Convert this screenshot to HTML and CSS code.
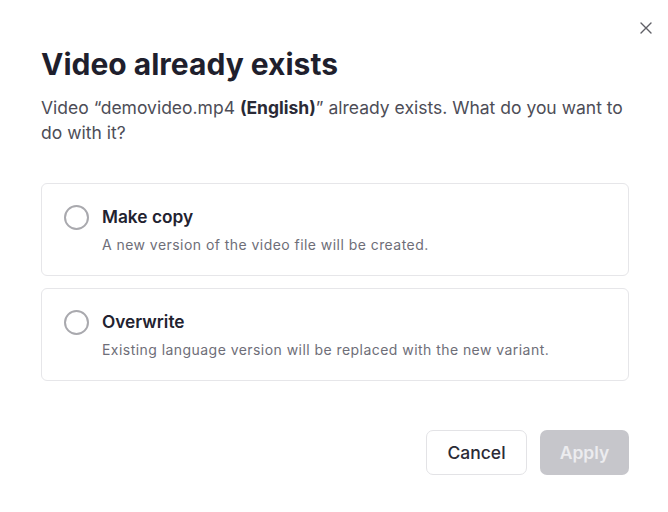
FILE: index.html
```html
<!DOCTYPE html>
<html>
<head>
<meta charset="utf-8">
<link rel="stylesheet" href="styles.css">
</head>
<body>
<div class="dialog">
  <button class="close" aria-label="Close">
    <svg width="12" height="12" viewBox="0 0 12 12"><path d="M1 1L11 11M11 1L1 11" stroke="#5f5f66" stroke-width="1.4" stroke-linecap="round"/></svg>
  </button>
  <h1 class="title">Video already exists</h1>
  <p class="lead">Video “demovideo.mp4 <b>(English)</b>” already exists. What do you want to do with it?</p>
  <div class="options">
    <label class="option">
      <span class="radio"></span>
      <span class="texts">
        <span class="opt-title">Make copy</span>
        <span class="opt-desc">A new version of the video file will be created.</span>
      </span>
    </label>
    <label class="option">
      <span class="radio"></span>
      <span class="texts">
        <span class="opt-title">Overwrite</span>
        <span class="opt-desc">Existing language version will be replaced with the new variant.</span>
      </span>
    </label>
  </div>
  <div class="actions">
    <button class="btn btn-secondary">Cancel</button>
    <button class="btn btn-primary" disabled>Apply</button>
  </div>
</div>
</body>
</html>
```
FILE: styles.css
```css
* { box-sizing: border-box; }
html, body { margin: 0; padding: 0; background: #fff; }
body { font-family: Inter, "Noto Sans", sans-serif; color: #22222f; }
.dialog {
  position: relative;
  width: 668px;
  height: 512px;
  padding: 44px 39px 0 41px;
}
.close {
  position: absolute;
  top: 22px;
  right: 16px;
  border: 0;
  background: none;
  padding: 0;
  width: 12px;
  height: 12px;
  display: flex;
}
.title {
  margin: 0;
  font-size: 30px;
  line-height: 40px;
  font-weight: 700;
  color: #1f1f2d;
  letter-spacing: 0;
}
.lead {
  margin: 11px 0 0 0;
  font-size: 17.5px;
  line-height: 25px;
  color: #4d4d57;
}
.lead b { font-weight: 700; color: #2a2a36; }
.options {
  margin-top: 38px;
  display: flex;
  flex-direction: column;
  gap: 12px;
}
.option {
  display: flex;
  align-items: flex-start;
  gap: 13px;
  border: 1px solid #e6e6e9;
  border-radius: 6px;
  height: 93px;
  padding: 21px 22px;
}
.radio {
  flex: none;
  width: 25px;
  height: 25px;
  border: 2px solid #a9a9ae;
  border-radius: 50%;
  margin-top: 0px;
}
.texts { display: flex; flex-direction: column; }
.opt-title {
  font-size: 17.3px;
  line-height: 24px;
  font-weight: 600;
  color: #22222f;
}
.opt-desc {
  margin-top: 6px;
  font-size: 14px;
  line-height: 20px;
  color: #6e6e78;
  letter-spacing: 0.45px;
}
.actions {
  margin-top: 49px;
  display: flex;
  justify-content: flex-end;
  gap: 13px;
}
.btn {
  font-family: Inter, "Noto Sans", sans-serif;
  height: 45px;
  border-radius: 7px;
  font-size: 17.5px;
  font-weight: 500;
  padding: 0;
}
.btn-secondary {
  width: 101px;
  background: #fff;
  border: 1px solid #e3e3e6;
  color: #2b2b36;
}
.btn-primary {
  width: 89px;
  background: #c6c6cb;
  border: 0;
  color: #ececef;
  font-weight: 600;
}
```
